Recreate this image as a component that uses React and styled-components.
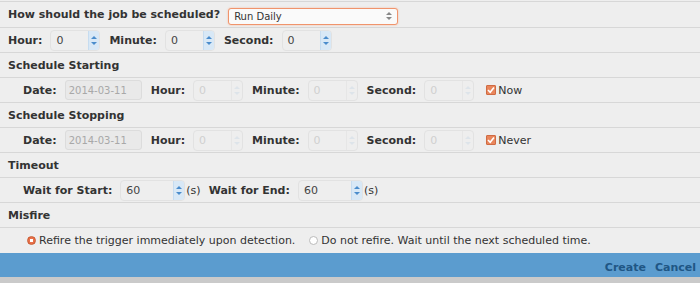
import React from "react";
import styled, { createGlobalStyle } from "styled-components";

const GlobalStyle = createGlobalStyle`
  html, body {
    margin: 0;
    padding: 0;
    background: #eeeeee;
  }
  body {
    font-family: "DejaVu Sans", Verdana, sans-serif;
    font-size: 11px;
    color: #333;
  }
`;

const Page = styled.div`
  width: 700px;
  height: 283px;
  background: #eeeeee;
  display: flex;
  flex-direction: column;
  padding-top: 1px;
  box-sizing: border-box;
  overflow: hidden;
`;

const Row = styled.div`
  display: flex;
  align-items: center;
  height: ${({ $h }) => $h || 25}px;
  border-top: 1px solid #d7d7d7;
  padding-left: ${({ $indent }) => ($indent ? 23 : 8)}px;
  gap: 8px;
  box-sizing: border-box;
`;

const Heading = styled.div`
  font-weight: bold;
  font-size: 11px;
  color: #333;
`;

const Label = styled.span`
  font-weight: bold;
  color: #333;
  margin-left: ${({ $ml }) => $ml || 0}px;
`;

const Select = styled.div`
  width: 170px;
  height: 17px;
  margin-top: 3px;
  box-sizing: border-box;
  border: 1px solid #f0946c;
  box-shadow: 0 0 2px #f6b89c;
  border-radius: 3px;
  background: #fafafa;
  display: flex;
  align-items: center;
  padding-left: 5px;
  font-size: 10px;
  color: #333;
`;

const SelectArrows = styled.span`
  margin-left: auto;
  margin-right: 5px;
  display: flex;
  flex-direction: column;
  gap: 2px;
`;

const Tri = styled.span`
  width: 0;
  height: 0;
  border-left: 3px solid transparent;
  border-right: 3px solid transparent;
  ${({ $up, $c }) =>
    $up
      ? `border-bottom: 3px solid ${$c};`
      : `border-top: 3px solid ${$c};`}
`;

const Spin = styled.div`
  width: ${({ $w }) => $w || 50}px;
  height: 21px;
  box-sizing: border-box;
  border: 1px solid #e2e2e2;
  border-radius: 4px;
  display: flex;
  align-items: stretch;
  background: #eeeeee;
`;

const SpinValue = styled.span`
  flex: 1;
  display: flex;
  align-items: center;
  padding-left: 5px;
  font-size: 11px;
  color: ${({ $off }) => ($off ? "#d0d0d0" : "#444")};
`;

const SpinButtons = styled.span`
  width: 10px;
  display: flex;
  flex-direction: column;
  align-items: center;
  justify-content: center;
  gap: 3px;
  background: ${({ $off }) => ($off ? "transparent" : "#d8e8f6")};
  border-left: 1px solid ${({ $off }) => ($off ? "#e6e6e6" : "#c6dcf0")};
  border-radius: 0 3px 3px 0;
`;

const DateBox = styled.div`
  width: 77px;
  height: 20px;
  box-sizing: border-box;
  border: 1px solid #dcdcdc;
  border-radius: 3px;
  background: #e9e9e9;
  color: #a8a8a8;
  font-size: 10px;
  display: flex;
  align-items: center;
  padding-left: 3px;
`;

const Check = styled.span`
  display: inline-flex;
  align-items: center;
  gap: 2px;
  margin-left: 4px;
  color: #333;
`;

const CheckBox = styled.span`
  width: 10px;
  height: 10px;
  background: #e9865c;
  border: 1px solid #cf6b43;
  box-sizing: border-box;
  border-radius: 1px;
  display: inline-flex;
  align-items: center;
  justify-content: center;
`;

const Unit = styled.span`
  color: #333;
  margin-left: -7px;
`;

const RadioRow = styled(Row)`
  gap: 0;
  padding-left: 27px;
`;

const Radio = styled.span`
  width: 9px;
  height: 9px;
  border-radius: 50%;
  box-sizing: border-box;
  border: 1px solid ${({ $on }) => ($on ? "#c85a30" : "#bbb")};
  background: ${({ $on }) =>
    $on ? "radial-gradient(circle, #fff 0 1.5px, #e8704a 2px)" : "#fff"};
  margin-right: 3px;
`;

const RadioText = styled.span`
  margin-right: 14px;
  color: #333;
`;

const Footer = styled.div`
  height: 24px;
  background: #5b9ccf;
  display: flex;
  justify-content: flex-end;
  align-items: flex-end;
  padding: 0 4px 3px 0;
  box-sizing: border-box;
  gap: 9px;
`;

const FooterButton = styled.span`
  font-weight: bold;
  color: #1f5685;
  font-size: 11px;
`;

const Bottom = styled.div`
  flex: 1;
  background: #cacaca;
`;

const SpinBox = ({ value, w, off }) => (
  <Spin $w={w}>
    <SpinValue $off={off}>{value}</SpinValue>
    <SpinButtons $off={off}>
      <Tri $up $c={off ? "#dde4ea" : "#4a8ccc"} />
      <Tri $c={off ? "#dde4ea" : "#4a8ccc"} />
    </SpinButtons>
  </Spin>
);

const Tick = () => (
  <svg width="8" height="8" viewBox="0 0 8 8">
    <path d="M1 4 L3.2 6.2 L7 1.5" stroke="#fff" strokeWidth="1.6" fill="none" />
  </svg>
);

const TimeRow = ({ checkLabel }) => (
  <Row $indent>
    <Label>Date:</Label>
    <DateBox>2014-03-11</DateBox>
    <Label $ml={1}>Hour:</Label>
    <SpinBox value="0" off />
    <Label $ml={1}>Minute:</Label>
    <SpinBox value="0" off />
    <Label $ml={1}>Second:</Label>
    <SpinBox value="0" off />
    <Check>
      <CheckBox>
        <Tick />
      </CheckBox>
      {checkLabel}
    </Check>
  </Row>
);

export default function App() {
  return (
    <Page>
      <GlobalStyle />
      <Row $h={26}>
        <Heading>How should the job be scheduled?</Heading>
        <Select>
          Run Daily
          <SelectArrows>
            <Tri $up $c="#888" />
            <Tri $c="#888" />
          </SelectArrows>
        </Select>
      </Row>
      <Row>
        <Label>Hour:</Label>
        <SpinBox value="0" />
        <Label $ml={1}>Minute:</Label>
        <SpinBox value="0" />
        <Label $ml={1}>Second:</Label>
        <SpinBox value="0" />
      </Row>
      <Row>
        <Heading>Schedule Starting</Heading>
      </Row>
      <TimeRow checkLabel="Now" />
      <Row>
        <Heading>Schedule Stopping</Heading>
      </Row>
      <TimeRow checkLabel="Never" />
      <Row>
        <Heading>Timeout</Heading>
      </Row>
      <Row $indent>
        <Label>Wait for Start:</Label>
        <SpinBox value="60" w={65} />
        <Unit>(s)</Unit>
        <Label>Wait for End:</Label>
        <SpinBox value="60" w={65} />
        <Unit>(s)</Unit>
      </Row>
      <Row>
        <Heading>Misfire</Heading>
      </Row>
      <RadioRow $h={26}>
        <Radio $on />
        <RadioText>Refire the trigger immediately upon detection.</RadioText>
        <Radio />
        <RadioText>Do not refire. Wait until the next scheduled time.</RadioText>
      </RadioRow>
      <Footer>
        <FooterButton>Create</FooterButton>
        <FooterButton>Cancel</FooterButton>
      </Footer>
      <Bottom />
    </Page>
  );
}
